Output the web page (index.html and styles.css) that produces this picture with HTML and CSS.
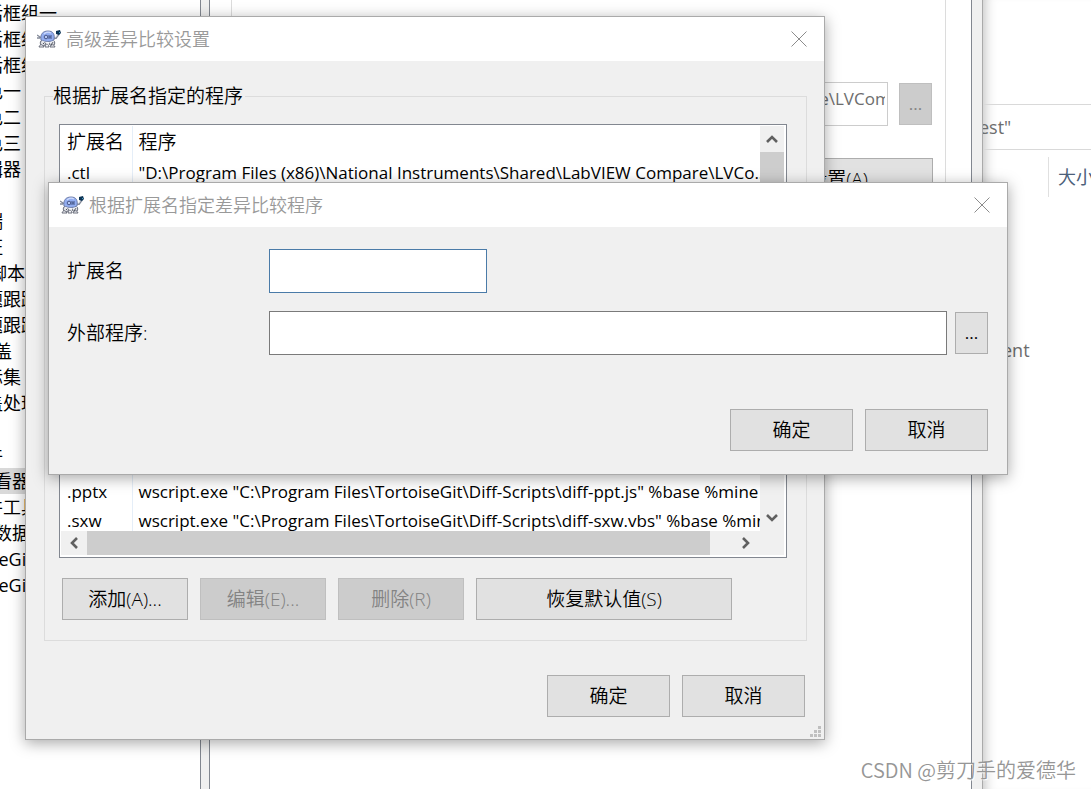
FILE: index.html
```
<!DOCTYPE html>
<html lang="zh-CN">
<head>
    <meta charset="UTF-8" />
    <meta name="viewport" content="width=device-width, initial-scale=1.0"/>
    <title>高级差异比较设置</title>
    <link rel="stylesheet" href="styles.css">
</head>
<body>
<svg class="defs" width="0" height="0" aria-hidden="true">
    <symbol id="turtle" viewBox="0 0 24 20">
        <path d="M0 6 L3 8 M0 9 L3 9 M3 8 L6 10" stroke="#858b99" stroke-width="1.3" fill="none"/>
        <path d="M16 9 L19 9 L22 5" stroke="#858b99" stroke-width="1.8" fill="none"/>
        <path d="M17 9 L19 8 L21 5" stroke="#e6e9f0" stroke-width="0.7" fill="none"/>
        <circle cx="6" cy="14" r="2.8" fill="#dfe1e6" stroke="#5d6270" stroke-width="0.9"/>
        <circle cx="15" cy="14" r="2.8" fill="#dfe1e6" stroke="#5d6270" stroke-width="0.9"/>
        <path d="M2 18 C3 15 5 15 7 18 Z M8 18 C9 14 11 14 12 18 Z M13 18 C14 15 17 15 18 18 Z" fill="#f2f3f6" stroke="#5d6270" stroke-width="0.9"/>
        <path d="M6 15 L8 13 M14 16 L16 13" stroke="#3c404b" stroke-width="0.9"/>
        <path d="M4 11 C3 5 6 2 11 2 C16 2 18 5 17 11 C14 13 8 13 4 11 Z" fill="#92adf0" stroke="#66759f" stroke-width="0.9"/>
        <path d="M7 5 C9 3 12 3 14 4" stroke="#cddafd" stroke-width="1.2" fill="none"/>
        <circle cx="9" cy="8" r="1.8" fill="#b7c9f5" stroke="#3d4c7c" stroke-width="0.9"/>
        <path d="M12 6 V10 M14 6 V10 M12 8 H14" stroke="#3d4c7c" stroke-width="0.9" fill="none"/>
        <path d="M5 12 C8 14 14 14 17 12" stroke="#f4f6fb" stroke-width="0.9" fill="none"/>
        <path d="M19 2 L23 1 L24 4 L22 6 L19 5 Z" fill="#0b3354"/>
        <path d="M22 3 L23 4" stroke="#48a1c6" stroke-width="1"/>
    </symbol>
    <symbol id="cross" viewBox="0 0 16 16">
        <path d="M0.5 0.5 L15.5 15.5 M15.5 0.5 L0.5 15.5" stroke="#8c8c8c" stroke-width="1" fill="none"/>
    </symbol>
    <symbol id="chevron" viewBox="0 0 12 10">
        <path d="M1 8 L6 3 L11 8" stroke="#606060" stroke-width="2.6" fill="none"/>
    </symbol>
</svg>

<div class="desktop">
    <ul class="tree">
        <li class="sub">对话框组一</li>
        <li class="sub">对话框组二</li>
        <li class="sub">对话框组三</li>
        <li class="sub">颜色一</li>
        <li class="sub">颜色二</li>
        <li class="sub">颜色三</li>
        <li class="sub">编辑器</li>
        <li></li>
        <li class="sub">远端</li>
        <li class="sub">凭证</li>
        <li>Hook 脚本</li>
        <li class="sub">问题跟踪集成</li>
        <li class="sub">问题跟踪配置</li>
        <li>图标覆盖</li>
        <li class="sub">图标集</li>
        <li class="sub">覆盖处理程序</li>
        <li></li>
        <li class="sub">邮件</li>
        <li class="selected">差异查看器</li>
        <li class="sub">合并工具</li>
        <li>保存的数据</li>
        <li>TortoiseGitBlame</li>
        <li>TortoiseGitUDiff</li>
    </ul>

    <div class="page">
        <div class="page-group">
            <div class="path-row">
                <input class="path" type="text" aria-label="程序路径" disabled
                       value='"D:\Program Files (x86)\National Instruments\Shared\LabVIEW Compare\LVCompare.exe"'>
                <button class="btn browse" type="button" disabled>...</button>
            </div>
            <div class="advanced-row">
                <button class="btn advanced" type="button">高级差异比较设置(A)</button>
            </div>
        </div>
    </div>

    <div class="explorer">
        <div class="search">est"</div>
        <div class="columns"><span class="column">大小</span></div>
        <div class="file">ent</div>
    </div>
</div>

<div class="dialog settings">
    <div class="titlebar">
        <svg class="app-icon"><use href="#turtle"/></svg>
        <h2>高级差异比较设置</h2>
        <button class="close" type="button" aria-label="关闭"><svg><use href="#cross"/></svg></button>
    </div>
    <div class="content">
        <fieldset class="group">
            <legend>根据扩展名指定的程序</legend>
            <div class="list">
                <div class="rows">
                    <table>
                        <thead>
                            <tr><th>扩展名</th><th>程序</th></tr>
                        </thead>
                        <tbody>
                            <tr><td>.ctl</td><td>"D:\Program Files (x86)\National Instruments\Shared\LabVIEW Compare\LVCo...</td></tr>
                            <tr class="spacer"><td></td><td></td></tr>
                            <tr><td>.pptx</td><td>wscript.exe "C:\Program Files\TortoiseGit\Diff-Scripts\diff-ppt.js" %base %mine</td></tr>
                            <tr><td>.sxw</td><td>wscript.exe "C:\Program Files\TortoiseGit\Diff-Scripts\diff-sxw.vbs" %base %mine</td></tr>
                        </tbody>
                    </table>
                </div>
                <div class="vscroll">
                    <svg class="arrow"><use href="#chevron"/></svg>
                    <div class="thumb"></div>
                    <svg class="arrow down"><use href="#chevron"/></svg>
                </div>
                <div class="hscroll">
                    <svg class="arrow left"><use href="#chevron"/></svg>
                    <div class="thumb"></div>
                    <svg class="arrow right"><use href="#chevron"/></svg>
                </div>
            </div>
            <div class="actions">
                <button class="btn" type="button">添加(A)...</button>
                <button class="btn" type="button" disabled>编辑(E)...</button>
                <button class="btn" type="button" disabled>删除(R)</button>
                <button class="btn wide" type="button">恢复默认值(S)</button>
            </div>
        </fieldset>
        <div class="footer">
            <button class="btn" type="button">确定</button>
            <button class="btn" type="button">取消</button>
        </div>
    </div>
    <svg class="grip" viewBox="0 0 11 11">
        <path d="M8 0h3v3h-3z M4 4h3v3h-3z M8 4h3v3h-3z M0 8h3v3h-3z M4 8h3v3h-3z M8 8h3v3h-3z" fill="#bfbfbf"/>
    </svg>
</div>

<div class="dialog program">
    <div class="titlebar">
        <svg class="app-icon"><use href="#turtle"/></svg>
        <h2>根据扩展名指定差异比较程序</h2>
        <button class="close" type="button" aria-label="关闭"><svg><use href="#cross"/></svg></button>
    </div>
    <form class="form">
        <div class="field">
            <label for="ext">扩展名</label>
            <input class="ext" type="text" id="ext">
        </div>
        <div class="field">
            <label for="external">外部程序:</label>
            <input class="external" type="text" id="external">
            <button class="btn browse" type="button">...</button>
        </div>
        <div class="footer">
            <button class="btn" type="submit">确定</button>
            <button class="btn" type="button">取消</button>
        </div>
    </form>
</div>

<div class="watermark">CSDN @剪刀手的爱德华</div>
</body>
</html>
```

FILE: styles.css
```
* {
  box-sizing: border-box;
}

body {
  margin: 0;
  height: 100vh;
  position: relative;
  overflow: hidden;
  background-color: #fff;
  color: #000;
  font-family: "Open Sans", "Noto Sans CJK SC", sans-serif;
  font-size: 19px;
  font-weight: 350;
}

.defs {
  position: absolute;
}

/* windows behind the dialogs */
.desktop {
  display: flex;
  height: 100%;
  background-color: #f0f0f0;
  font-weight: 400;
}

.tree {
  flex: 0 0 201px;
  margin: 0;
  padding: 0;
  list-style: none;
  overflow: hidden;
  background-color: #fff;
  border-right: 1px solid #828790;
  font-size: 18px;
  line-height: 26px;
  white-space: nowrap;
}

.tree li {
  height: 26px;
  text-indent: -60px;
}

.tree .sub {
  text-indent: -33px;
}

.tree .selected {
  background-color: #d9d9d9;
}

.page {
  flex: 1;
  min-width: 0;
  margin: 0 10px 0 8px;
  padding: 0 25px 0 21px;
  background-color: #fff;
  border: solid #828790;
  border-width: 0 1px;
}

.page-group {
  height: 475px;
  padding: 82px 13px 0 16px;
  border: 1px solid #dcdcdc;
  border-top: none;
}

.path-row {
  display: flex;
  align-items: center;
  gap: 11px;
}

.path {
  flex: 1;
  min-width: 0;
  height: 44px;
  padding: 0 2px 12px 10px;
  background-color: #fff;
  border: 1px solid #ccc;
  color: #6d6d6d;
  font-family: inherit;
  font-size: 17px;
}

.advanced-row {
  display: flex;
  justify-content: flex-end;
  margin: 32px -1px 0 0;
}

.explorer {
  flex: 0 0 109px;
  padding-top: 104px;
  background-color: #fff;
  border-left: 1px solid #aaa;
  box-shadow: inset 12px 0 12px -10px rgba(0, 0, 0, 0.25);
  overflow: hidden;
  color: #6d6d6d;
  font-size: 18px;
}

.search {
  height: 46px;
  border: solid #d9d9d9;
  border-width: 1px 0;
  line-height: 44px;
  text-indent: -4px;
}

.columns {
  height: 40px;
  margin: 7px 0 0 65px;
  padding-left: 9px;
  border-left: 1px solid #e0e0e0;
  line-height: 40px;
  color: #4c607a;
  white-space: nowrap;
}

.file {
  margin-top: 139px;
  padding-left: 19px;
  line-height: 28px;
}

/* dialogs */
.dialog {
  position: absolute;
  background-color: #f0f0f0;
  border: 1px solid #aaa;
  box-shadow: 0 3px 14px rgba(0, 0, 0, 0.35);
}

.settings {
  left: 25px;
  right: 266px;
  top: 16px;
}

.program {
  left: 48px;
  right: 83px;
  top: 182px;
}

.titlebar {
  display: flex;
  align-items: center;
  height: 44px;
  padding: 0 17px 1px 11px;
  background-color: #fff;
}

.app-icon {
  width: 24px;
  height: 20px;
  margin-right: 5px;
}

.titlebar h2 {
  flex: 1;
  margin: 0;
  color: #999;
  font-size: 18px;
  font-weight: 350;
  line-height: 26px;
}

.close {
  display: flex;
  padding: 0;
  border: none;
  background: none;
}

.close svg {
  width: 16px;
  height: 16px;
}

.btn {
  width: 123px;
  height: 42px;
  padding: 0 0 2px;
  background-color: #e1e1e1;
  border: 1px solid #adadad;
  color: #000;
  font-family: inherit;
  font-size: 19px;
  font-weight: 350;
}

.btn:disabled {
  background-color: #ccc;
  border-color: #bfbfbf;
  color: #838383;
}

.btn.browse {
  width: 33px;
  flex: none;
  font-size: 17px;
  font-weight: 400;
}

.btn.advanced {
  width: 304px;
}

.content {
  padding: 23px 17px 22px 18px;
}

.group {
  margin: 0;
  padding: 16px 19px 20px 14px;
  border: 1px solid #dcdcdc;
}

.group legend {
  margin-left: -6px;
  padding: 0 2px 0 0;
  line-height: 24px;
}

.list {
  display: grid;
  grid-template-columns: 1fr 24px;
  grid-template-rows: 405px 24px;
  padding: 1px 2px 2px 1px;
  background-color: #fff;
  border: 1px solid #828790;
}

.rows {
  overflow: hidden;
}

.rows table {
  width: 100%;
  table-layout: fixed;
  border-collapse: collapse;
  font-size: 17px;
}

.rows th,
.rows td {
  height: 29px;
  padding: 0 0 0 6px;
  line-height: 29px;
  text-align: left;
  white-space: nowrap;
  overflow: hidden;
}

.rows td {
  font-weight: 400;
}

.rows th {
  height: 32px;
  font-size: 19px;
  font-weight: 350;
}

.rows th:first-child,
.rows td:first-child {
  width: 71px;
  border-right: 1px solid #e5eef8;
}

.rows .spacer td {
  height: 290px;
}

.vscroll,
.hscroll {
  display: flex;
  background-color: #f0f0f0;
}

.vscroll {
  flex-direction: column;
}

.hscroll {
  grid-column: 1 / 3;
  padding-right: 25px;
}

.arrow {
  flex: none;
  width: 26px;
  height: 26px;
  padding: 7px;
}

.vscroll .arrow {
  width: 24px;
  padding: 7px 6px;
}

.hscroll .arrow {
  height: 24px;
  padding: 6px 7px;
}

.down {
  margin-top: auto;
  transform: rotate(180deg);
}

.left {
  transform: rotate(-90deg);
}

.right {
  margin-left: auto;
  transform: rotate(90deg);
}

.thumb {
  background-color: #cdcdcd;
}

.vscroll .thumb {
  height: 60px;
}

.hscroll .thumb {
  width: 623px;
}

.actions {
  display: flex;
  gap: 12px;
  margin: 20px 0 0 3px;
}

.actions .btn {
  width: 126px;
}

.actions .wide {
  width: 256px;
}

.footer {
  display: flex;
  justify-content: flex-end;
  gap: 12px;
}

.content .footer {
  margin: 34px 2px 0 0;
}

.grip {
  position: absolute;
  right: 3px;
  bottom: 2px;
  width: 11px;
  height: 11px;
}

.form {
  padding: 22px 19px 23px 18px;
}

.field {
  display: flex;
  align-items: center;
  margin-bottom: 18px;
}

.field label {
  flex: 0 0 202px;
  line-height: 28px;
}

.field input {
  height: 44px;
  padding: 0 6px;
  background-color: #fff;
  border: 1px solid #7a7a7a;
  font-family: inherit;
  font-size: 18px;
}

.field .ext {
  width: 218px;
  border-color: #4a7ba8;
}

.field .external {
  flex: 1;
  min-width: 0;
  margin-right: 8px;
}

.form .footer {
  margin-top: 54px;
}

.watermark {
  position: absolute;
  right: 15px;
  bottom: 4px;
  color: #969696;
  font-family: "Noto Sans CJK SC", sans-serif;
  font-size: 20px;
  line-height: 30px;
  text-shadow: 1px 1px 1px #fff;
}
```
